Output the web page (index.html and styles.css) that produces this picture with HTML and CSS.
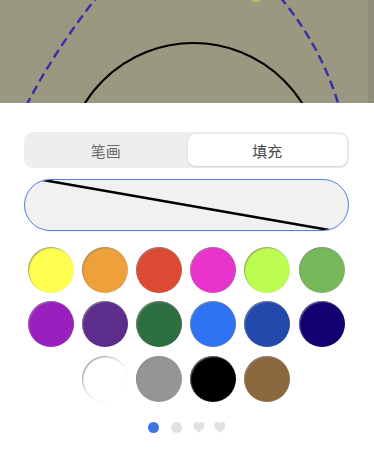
FILE: index.html
```html
<!DOCTYPE html>
<html lang="zh">
<head>
<meta charset="utf-8">
<title>颜色</title>
<link rel="stylesheet" href="styles.css">
</head>
<body>
<div class="canvas">
  <svg class="canvas-svg" width="374" height="103" viewBox="0 0 374 103">
    <rect width="374" height="103" fill="#9a9880"/>
    <rect x="368" width="6" height="103" fill="#8f8d77"/>
    <ellipse cx="256" cy="0" rx="4" ry="2" fill="#c4bd4c"/>
    <circle cx="193.5" cy="171" r="128" fill="none" stroke="#000" stroke-width="2"/>
    <path d="M26 106 Q 55 50 97 -3" fill="none" stroke="#3530aa" stroke-width="2.4" stroke-dasharray="9 5"/>
    <path d="M280 -3 Q 321 46 339 106" fill="none" stroke="#3530aa" stroke-width="2.4" stroke-dasharray="9 5"/>
  </svg>
</div>
<div class="panel">
  <div class="seg">
    <div class="seg-item">笔画</div>
    <div class="seg-item active">填充</div>
  </div>
  <div class="preview">
    <svg class="preview-svg" viewBox="0 0 323 50" preserveAspectRatio="none">
      <line x1="18" y1="0" x2="304" y2="50" stroke="#000" stroke-width="2.5"/>
    </svg>
  </div>
  <div class="swatches">
    <div class="sw" style="background:#ffff4f"></div>
    <div class="sw" style="background:#eea03a"></div>
    <div class="sw" style="background:#dc4a34"></div>
    <div class="sw" style="background:#e834cc"></div>
    <div class="sw" style="background:#bdfd51"></div>
    <div class="sw" style="background:#77b95a"></div>
    <div class="sw" style="background:#9a1fbf"></div>
    <div class="sw" style="background:#5c2d8a"></div>
    <div class="sw" style="background:#2e6f41"></div>
    <div class="sw" style="background:#2f72f4"></div>
    <div class="sw" style="background:#234aab"></div>
    <div class="sw" style="background:#110070"></div>
    <div class="sw start2" style="background:#ffffff"></div>
    <div class="sw" style="background:#959595"></div>
    <div class="sw" style="background:#000000"></div>
    <div class="sw" style="background:#8a673c"></div>
  </div>
  <div class="pager">
    <span class="dot dot-active"></span>
    <span class="dot dot-2"></span>
    <svg class="heart heart-1" viewBox="2 3 20 18.4"><path d="M12 21.35l-1.45-1.32C5.4 15.36 2 12.28 2 8.5 2 5.42 4.42 3 7.5 3c1.74 0 3.41.81 4.5 2.09C13.09 3.81 14.76 3 16.5 3 19.58 3 22 5.42 22 8.5c0 3.78-3.4 6.86-8.55 11.54L12 21.35z"/></svg>
    <svg class="heart" viewBox="2 3 20 18.4"><path d="M12 21.35l-1.45-1.32C5.4 15.36 2 12.28 2 8.5 2 5.42 4.42 3 7.5 3c1.74 0 3.41.81 4.5 2.09C13.09 3.81 14.76 3 16.5 3 19.58 3 22 5.42 22 8.5c0 3.78-3.4 6.86-8.55 11.54L12 21.35z"/></svg>
  </div>
</div>
</body>
</html>
```

FILE: styles.css
```css
html, body {
  margin: 0;
  padding: 0;
  background: #ffffff;
}
body {
  width: 374px;
  height: 465px;
  overflow: hidden;
  font-family: "Noto Sans CJK SC", "Noto Sans", sans-serif;
}
.canvas {
  height: 103px;
}
.canvas-svg {
  display: block;
}
.panel {
  padding: 29px 25px 0 24px;
}
.seg {
  display: flex;
  gap: 2px;
  height: 36px;
  box-sizing: border-box;
  padding: 2px;
  background: #eeeeee;
  border-radius: 9px;
}
.seg-item {
  flex: 1;
  display: flex;
  align-items: center;
  justify-content: center;
  font-size: 15px;
  color: #6a6a6a;
  border-radius: 7px;
}
.seg-item.active {
  background: #ffffff;
  color: #484848;
  box-shadow: 0 0 1px rgba(0, 0, 0, 0.18), 0 1px 2px rgba(0, 0, 0, 0.1);
}
.preview {
  margin-top: 11px;
  height: 52px;
  box-sizing: border-box;
  border: 1px solid #4f7fe4;
  border-radius: 26px;
  background: #f1f1f1;
  overflow: hidden;
}
.preview-svg {
  display: block;
  width: 100%;
  height: 100%;
}
.swatches {
  margin: 16px 0 0 3.7px;
  display: grid;
  grid-template-columns: repeat(6, 46px);
  grid-auto-rows: 46px;
  gap: 8.3px 8.2px;
}
.sw {
  border-radius: 50%;
  box-shadow: inset 1px 1px 1.2px rgba(140, 140, 140, 0.8);
}
.start2 {
  grid-column-start: 2;
}
.pager {
  margin-top: 20.6px;
  display: flex;
  align-items: center;
  justify-content: center;
  height: 11px;
}
.dot {
  width: 11px;
  height: 11px;
  border-radius: 50%;
  background: #e2e2e2;
}
.dot-active {
  background: #3f74e0;
  margin-right: 12.4px;
}
.dot-2 {
  margin-right: 11.3px;
}
.heart {
  width: 11.7px;
  height: 10.7px;
  fill: #e2e2e2;
}
.heart-1 {
  margin-right: 8.6px;
}
```
